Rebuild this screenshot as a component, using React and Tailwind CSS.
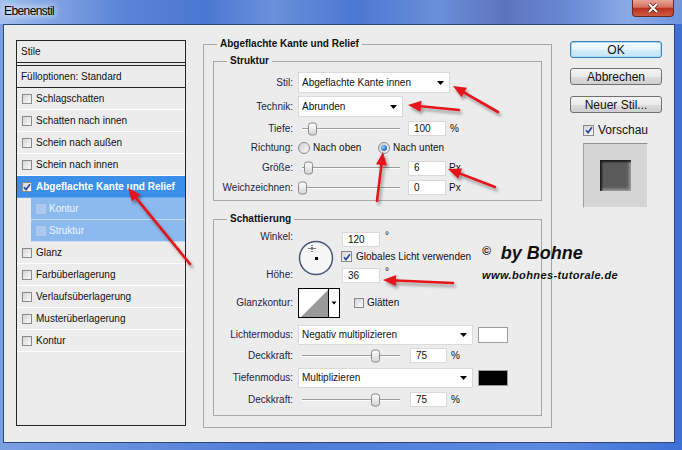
import React from 'react';

const effects = [
  { label: 'Schlagschatten' },
  { label: 'Schatten nach innen' },
  { label: 'Schein nach außen' },
  { label: 'Schein nach innen' },
  { label: 'Abgeflachte Kante und Relief', on: true, active: true },
  { label: 'Kontur', sub: true },
  { label: 'Struktur', sub: true },
  { label: 'Glanz' },
  { label: 'Farbüberlagerung' },
  { label: 'Verlaufsüberlagerung' },
  { label: 'Musterüberlagerung' },
  { label: 'Kontur' },
];

// red marker arrows drawn over the dialog: [tail, tip]
const arrows = [
  [[190, 264], [128, 188]],
  [[498, 112], [453, 86]],
  [[459, 110], [408, 105]],
  [[377, 201], [383, 152]],
  [[495, 187], [448, 169]],
  [[453, 283], [383, 280]],
];

const Check = ({ on, sub, big }) => (
  <span
    className={`grid shrink-0 place-items-center border ${big ? 'h-[11px] w-[11px]' : 'h-[10px] w-[10px]'} ${
      sub ? 'border-[#b3c9e6] bg-[#a9c9f1]' : 'border-[#8a8a8a] bg-[linear-gradient(135deg,#d4d4d4,#fbfbfb)]'
    }`}
  >
    {on && (
      <svg width="8" height="8" viewBox="0 0 8 8">
        <path d="M1 4.2 3 6.6 7 1.2" fill="none" stroke="#2b4a9e" strokeWidth="1.7" />
      </svg>
    )}
  </span>
);

const Radio = ({ on }) => (
  <span className="grid h-[12px] w-[12px] shrink-0 place-items-center rounded-full border border-[#8c8c8c] bg-[linear-gradient(135deg,#d0d0d0,#fafafa)]">
    {on && <span className="h-[6px] w-[6px] rounded-full bg-[radial-gradient(circle_at_35%_35%,#9ad4fa,#1c69bb_70%)]" />}
  </span>
);

const Label = ({ children }) => <span className="w-[75px] shrink-0 text-right text-[#1c2540]">{children}</span>;

const Row = ({ label, className = '', children }) => (
  <div className={`flex items-center ${className}`}>
    <Label>{label}</Label>
    <div className="ml-[5px] flex h-full items-center">{children}</div>
  </div>
);

const Select = ({ value, w }) => (
  <div className={`flex h-full items-center justify-between border border-[#dadada] bg-white pl-[3px] pr-[5px] ${w}`}>
    <span>{value}</span>
    <svg width="7" height="4" viewBox="0 0 7 4">
      <path d="M0 0h7L3.5 4z" fill="#000" />
    </svg>
  </div>
);

const Field = ({ value, className = '' }) => (
  <div className={`flex h-[15px] items-center border border-[#d9d9d9] bg-white pl-[5px] ${className}`}>{value}</div>
);

const Slider = ({ at }) => (
  <div className="relative flex h-full w-[104px] shrink-0 items-center">
    <div className="ml-[4px] h-[2px] w-[98px] border-t border-[#9c9c9c] bg-white" />
    <span
      className="absolute top-1/2 h-[13px] w-[9px] -translate-y-1/2 rounded-[3px] border border-[#8a8a8a] bg-[linear-gradient(#fdfdfd,#d6d6d6)]"
      style={{ left: at }}
    />
  </div>
);

const Swatch = ({ color }) => (
  <span className={`ml-[5px] h-[16px] w-[30px] border border-[#9a9a9a] ${color}`} />
);

const Btn = ({ primary, className = '', children }) => (
  <div
    className={`flex h-[17px] w-[92px] items-center justify-center rounded-[3px] border text-[12px] ${
      primary
        ? 'border-[#3c7fb1] bg-[linear-gradient(#f4fbfe_0%,#e6f4fc_50%,#d4ecfa_51%,#c6e4f7_100%)] shadow-[inset_0_0_0_1px_#a8def8]'
        : 'border-[#707070] bg-[linear-gradient(#f3f3f3_0%,#ebebeb_50%,#dddddd_51%,#cfcfcf_100%)]'
    } ${className}`}
  >
    {children}
  </div>
);

const AngleDial = () => (
  <svg width="36" height="36" viewBox="0 0 36 36" className="ml-[5px] mt-[10px] shrink-0">
    <circle cx="18" cy="18" r="16.5" fill="#f6f6f6" stroke="#4a5677" strokeWidth="1.5" />
    <path d="M14 5v7M10.5 8.5h7" stroke="#000" strokeWidth="1" strokeDasharray="1 1" />
    <rect x="17" y="17" width="3" height="3" fill="#000" />
  </svg>
);

const ContourSwatch = () => (
  <svg width="42" height="30" viewBox="0 0 42 30" className="ml-[5px] shrink-0">
    <rect x="0.5" y="0.5" width="41" height="29" fill="#fff" stroke="#000" />
    <path d="M3 29 L30 2 L30 29 Z" fill="#9a9a9a" />
    <path d="M30.5 0v30" stroke="#000" />
    <path d="M33.5 13.5h5l-2.5 3z" fill="#000" />
  </svg>
);

const Arrow = ({ from, to }) => {
  const [x1, y1] = from;
  const [x2, y2] = to;
  const a = Math.atan2(y2 - y1, x2 - x1);
  const bx = x2 - 13 * Math.cos(a);
  const by = y2 - 13 * Math.sin(a);
  const px = -Math.sin(a) * 5.5;
  const py = Math.cos(a) * 5.5;
  return (
    <g>
      <line x1={x1} y1={y1} x2={bx} y2={by} stroke="#e4141b" strokeWidth="2.6" strokeLinecap="round" />
      <polygon points={`${x2},${y2} ${bx + px},${by + py} ${bx - px},${by - py}`} fill="#e4141b" />
    </g>
  );
};

const EffectList = () => (
  <div className="ml-[12px] mt-[15px] h-[386px] w-[170px] shrink-0 border border-[#262626]">
    <div className="flex h-[22px] items-center border-b border-[#262626] pl-[4px]">Stile</div>
    <div className="mt-[2px] flex h-[23px] items-center border-y border-[#262626] pl-[4px]">Fülloptionen: Standard</div>
    {effects.map((fx, i) =>
      fx.sub ? (
        <div key={i} className="flex h-[22px] pl-[14px]">
          <div className="flex flex-1 items-center gap-[3px] border-b border-[#c7dcf6] bg-[#8cb9ee] pl-[5px] text-[#eef5fd]">
            <Check sub />
            {fx.label}
          </div>
        </div>
      ) : (
        <div
          key={i}
          className={`flex h-[22px] items-center gap-[4px] border-b pl-[5px] ${
            fx.active ? 'border-[#6ea8ea] bg-[#3b8fe8] font-bold text-white' : 'border-white'
          }`}
        >
          <Check on={fx.on} />
          {fx.label}
        </div>
      )
    )}
  </div>
);

const BevelGroup = () => (
  <fieldset className="ml-[17px] mt-[13px] w-[349px] shrink-0 border border-[#a8a8a8] px-[9px] pb-[11px] pt-[5px]">
    <legend className="ml-[4px] px-[3px] font-bold">Abgeflachte Kante und Relief</legend>

    <fieldset className="border border-[#a8a8a8] px-[4px] pb-[3px] pt-[5px]">
      <legend className="ml-[9px] px-[3px] font-bold">Struktur</legend>
      <Row label="Stil:" className="h-[21px]">
        <Select value="Abgeflachte Kante innen" w="w-[152px]" />
      </Row>
      <Row label="Technik:" className="mt-[3px] h-[21px]">
        <Select value="Abrunden" w="w-[105px]" />
      </Row>
      <Row label="Tiefe:" className="mt-[2px] h-[19px]">
        <Slider at={10} />
        <Field value="100" className="ml-[6px] w-[38px]" />
        <span className="ml-[4px]">%</span>
      </Row>
      <Row label="Richtung:" className="h-[20px]">
        <Radio />
        <span className="ml-[3px] w-[65px]">Nach oben</span>
        <Radio on />
        <span className="ml-[3px]">Nach unten</span>
      </Row>
      <Row label="Größe:" className="h-[20px]">
        <Slider at={6} />
        <Field value="6" className="ml-[6px] w-[38px]" />
        <span className="ml-[3px]">Px</span>
      </Row>
      <Row label="Weichzeichnen:" className="h-[19px]">
        <Slider at={0} />
        <Field value="0" className="ml-[6px] w-[38px]" />
        <span className="ml-[3px]">Px</span>
      </Row>
    </fieldset>

    <fieldset className="mt-[12px] border border-[#a8a8a8] px-[4px] pb-[6px] pt-[5px]">
      <legend className="ml-[9px] px-[3px] font-bold">Schattierung</legend>
      <div className="flex h-[52px] items-start">
        <div className="flex w-[75px] shrink-0 flex-col items-end pt-[1px] text-[#1c2540]">
          <span>Winkel:</span>
          <span className="mt-[26px]">Höhe:</span>
        </div>
        <AngleDial />
        <div className="ml-[7px] flex flex-col">
          <div className="mt-[2px] flex h-[14px] items-start">
            <Field value="120" className="ml-[1px] h-[14px] w-[38px] pl-[4px]" />
            <span className="ml-[5px] -mt-[2px]">°</span>
          </div>
          <div className="mt-[5px] flex h-[11px] items-center gap-[4px]">
            <Check on big />
            Globales Licht verwenden
          </div>
          <div className="mt-[6px] flex h-[14px] items-start">
            <Field value="36" className="ml-[1px] h-[14px] w-[38px] pl-[4px]" />
            <span className="ml-[5px] -mt-[2px]">°</span>
          </div>
        </div>
      </div>

      <div className="mt-[6px] flex h-[30px] items-center">
        <Label>Glanzkontur:</Label>
        <ContourSwatch />
        <div className="ml-[14px] flex items-center gap-[3px]">
          <Check />
          Glätten
        </div>
      </div>

      <Row label="Lichtermodus:" className="mt-[7px] h-[20px]">
        <Select value="Negativ multiplizieren" w="w-[175px]" />
        <Swatch color="bg-white" />
      </Row>
      <Row label="Deckkraft:" className="mt-[1px] h-[19px]">
        <Slider at={73} />
        <Field value="75" className="ml-[8px] w-[37px]" />
        <span className="ml-[4px]">%</span>
      </Row>
      <Row label="Tiefenmodus:" className="mt-[3px] h-[20px]">
        <Select value="Multiplizieren" w="w-[175px]" />
        <Swatch color="bg-black" />
      </Row>
      <Row label="Deckkraft:" className="mt-[2px] h-[19px]">
        <Slider at={73} />
        <Field value="75" className="ml-[8px] w-[37px]" />
        <span className="ml-[4px]">%</span>
      </Row>
    </fieldset>
  </fieldset>
);

const SideButtons = () => (
  <div className="ml-[18px] mt-[16px] flex w-[92px] shrink-0 flex-col">
    <Btn primary>OK</Btn>
    <Btn className="mt-[10px]">Abbrechen</Btn>
    <Btn className="mt-[11px]">Neuer Stil...</Btn>
    <div className="ml-[13px] mt-[11px] flex h-[12px] items-center gap-[4px] text-[12px]">
      <Check on big />
      Vorschau
    </div>
    <div className="ml-[13px] mt-[7px] grid h-[65px] w-[65px] place-items-center border border-[#ececec] border-l-[#a3a3a3] border-t-[#8f8f8f] bg-[#d5d5d5]">
      <div className="h-[31px] w-[31px] bg-[#5a5a5a] shadow-[inset_2px_2px_2px_#1c1c1c,inset_-2px_-2px_3px_#9c9c9c]" />
    </div>
  </div>
);

export default function App() {
  return (
    <div className="relative h-[450px] w-[682px] overflow-hidden bg-[linear-gradient(90deg,#7aa0e2,#4d7cd7_40%,#5b8ae0_80%,#3f70d6)] font-['Liberation_Sans',Arial,sans-serif] text-[10px] leading-[12px] text-[#111]">
      <div className="flex h-[24px] items-start justify-between bg-[linear-gradient(90deg,#a3bfec_0%,#86a8e6_6%,#5a84d6_18%,#4a77d1_30%,#6990da_40%,#4b78d2_52%,#6a8fd9_64%,#5d74bd_74%,#6b8bd6_84%,#8aaae6_92%,#6f95dd_100%)]">
        <span className="ml-[4px] mt-[5px] text-[12px] tracking-[-0.6px] text-black [text-shadow:0_0_6px_#fff,0_0_10px_#fff]">
          Ebenenstil
        </span>
        <div className="mr-[8px] grid h-[17px] w-[42px] place-items-center rounded-b-[4px] border border-t-0 border-[#6b2a20] bg-[linear-gradient(#e8a496,#d5705e_45%,#b9321f_52%,#cc5a42_100%)]">
          <svg width="12" height="10" viewBox="0 0 12 10">
            <path d="M2 1l8 8M10 1l-8 8" stroke="#5a1a12" strokeWidth="3.4" />
            <path d="M2 1l8 8M10 1l-8 8" stroke="#fff" strokeWidth="2" />
          </svg>
        </div>
      </div>

      <div className="ml-[3px] flex h-[419px] w-[672px] items-start border border-[#2b4777] bg-[#ececec]">
        <EffectList />
        <BevelGroup />
        <SideButtons />
      </div>

      <div className="absolute left-[482px] top-[243px] font-bold italic text-[#111]">
        <div className="flex items-start">
          <span className="mt-[2px] text-[12px]">©</span>
          <span className="ml-[10px] text-[18px] leading-[20px]">by Bohne</span>
        </div>
        <div className="mt-[6px] text-[11px] tracking-[0.4px]">www.bohnes-tutorale.de</div>
      </div>

      <svg className="pointer-events-none absolute left-0 top-0" width="682" height="450">
        <defs>
          <filter id="arrow-shadow" x="-20%" y="-20%" width="140%" height="140%">
            <feDropShadow dx="2" dy="3" stdDeviation="1.5" floodColor="#000" floodOpacity="0.35" />
          </filter>
        </defs>
        <g filter="url(#arrow-shadow)">
          {arrows.map(([from, to], i) => (
            <Arrow key={i} from={from} to={to} />
          ))}
        </g>
      </svg>
    </div>
  );
}
